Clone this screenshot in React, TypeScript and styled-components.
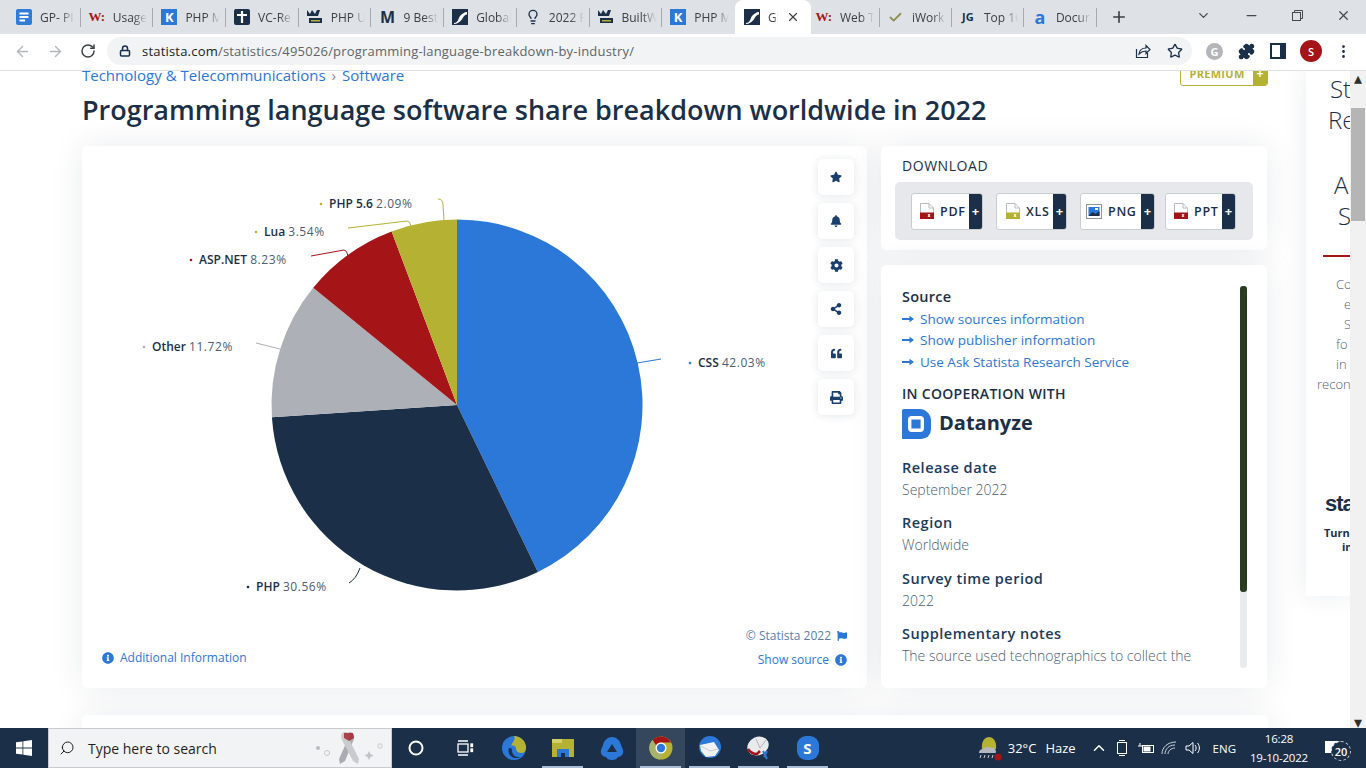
import React from 'react';
import styled, { createGlobalStyle } from 'styled-components';
import {
  ArrowLeft,
  ArrowRight,
  RotateCw,
  Lock,
  Star,
  Puzzle,
  MoreVertical,
  X,
  Minus,
  Plus,
  ChevronDown,
  ChevronUp,
  Search,
  Lightbulb,
  Check,
} from 'lucide-react';
import { FaStar, FaBell, FaCog, FaShareAlt, FaQuoteLeft, FaPrint, FaInfoCircle, FaFlag } from 'react-icons/fa';

const NAVY = '#1b3048';
const BLUE = '#2b78d9';
const OLIVE = '#b5b233';
const RED = '#a51417';
const GREY = '#adb0b6';

const GlobalStyle = createGlobalStyle`
  html, body {
    margin: 0;
    padding: 0;
    background: #fff;
    overflow: hidden;
  }
  * {
    box-sizing: border-box;
  }
  body {
    font-family: "Open Sans", "Liberation Sans", sans-serif;
    color: ${NAVY};
  }
`;

const Frame = styled.div`
  width: 1366px;
  height: 768px;
  display: flex;
  flex-direction: column;
  overflow: hidden;
`;

/* ---- browser chrome ---- */

const TabStrip = styled.div`
  flex: 0 0 34px;
  display: flex;
  align-items: stretch;
  padding-left: 8px;
  background: #dee1e6;
`;

const TabItem = styled.div<{ $active?: boolean; $plain?: boolean; $width?: number; $pad?: number }>`
  flex: 0 0 ${(p) => p.$width ?? 72.7}px;
  min-width: 0;
  display: flex;
  align-items: center;
  gap: 8px;
  padding-left: ${(p) => p.$pad ?? 8}px;
  padding-right: ${(p) => (p.$active ? '11px' : '6px')};
  background: ${(p) => (p.$active ? '#fff' : 'transparent')};
  border-radius: ${(p) => (p.$active ? '8px 8px 0 0' : '0')};
  position: relative;
  &::after {
    content: '';
    display: ${(p) => (p.$plain ? 'none' : 'block')};
    width: 1px;
    height: 19px;
    background: #a7abb1;
    position: absolute;
    right: 0;
    top: 8px;
  }
`;

const TabTitle = styled.span`
  flex: 1;
  min-width: 0;
  font-size: 12px;
  color: #3c4043;
  white-space: nowrap;
  overflow: hidden;
  -webkit-mask-image: linear-gradient(to right, #000 60%, transparent 100%);
  mask-image: linear-gradient(to right, #000 60%, transparent 100%);
`;

const FavSlot = styled.span`
  flex: 0 0 16px;
  width: 16px;
  height: 16px;
  display: flex;
  align-items: center;
  justify-content: center;
`;

const FavLetter = styled.span<{ $color: string; $bg?: string; $serif?: boolean; $size?: number }>`
  width: 16px;
  height: 16px;
  display: flex;
  align-items: center;
  justify-content: center;
  font-family: ${(p) => (p.$serif ? '"Liberation Serif", serif' : '"Open Sans", sans-serif')};
  font-weight: 700;
  font-size: ${(p) => p.$size ?? 12}px;
  line-height: 16px;
  color: ${(p) => p.$color};
  background: ${(p) => p.$bg ?? 'transparent'};
`;

const NewTab = styled.div`
  margin-left: 13px;
  display: flex;
  align-items: center;
  color: #3c4043;
`;

const WindowControls = styled.div`
  margin-left: auto;
  display: flex;
  align-items: center;
  padding-right: 15px;
  gap: 33px;
  color: #45494e;
  padding-bottom: 4px;
`;

const Toolbar = styled.div`
  flex: 0 0 37px;
  display: flex;
  align-items: center;
  background: #fff;
  border-bottom: 1px solid #dfe1e5;
  padding: 0 14px 2px 14px;
`;

const NavIcons = styled.div`
  display: flex;
  align-items: center;
  gap: 16px;
  width: 94px;
`;

const NavIcon = styled.span<{ $dim?: boolean }>`
  display: flex;
  color: ${(p) => (p.$dim ? '#b3b7bc' : '#3c4043')};
`;

const AddressPill = styled.div`
  flex: 0 0 1085px;
  height: 28px;
  display: flex;
  align-items: center;
  padding: 0 9px 0 12px;
  background: #f1f3f4;
  border-radius: 14px;
  color: ${NAVY};
`;

const UrlText = styled.span`
  margin-left: 11px;
  font-size: 13px;
  letter-spacing: 0.2px;
  color: #5f6368;
  b {
    font-weight: 400;
    color: #202124;
  }
`;

const PillActions = styled.div`
  margin-left: auto;
  display: flex;
  align-items: center;
  gap: 16px;
`;

const ExtIcons = styled.div`
  display: flex;
  align-items: center;
  gap: 15px;
  margin-left: 14px;
  color: ${NAVY};
`;

const GrammarlyDot = styled.span`
  width: 17px;
  height: 17px;
  border-radius: 50%;
  background: #b3b5b9;
  color: #fff;
  font-size: 11px;
  font-weight: 700;
  display: flex;
  align-items: center;
  justify-content: center;
`;

const Avatar = styled.span`
  width: 22px;
  height: 22px;
  margin: 0 -2px 0 -1px;
  border-radius: 50%;
  background: ${RED};
  color: #fff;
  font-size: 11px;
  font-weight: 600;
  display: flex;
  align-items: center;
  justify-content: center;
`;

/* ---- page ---- */

const PageArea = styled.div`
  flex: 1;
  min-height: 0;
  display: flex;
  overflow: hidden;
`;

const Content = styled.div`
  flex: 0 0 1350px;
  display: flex;
  align-items: flex-start;
  padding-left: 82px;
  overflow: hidden;
`;

const Main = styled.main`
  flex: 0 0 1186px;
  margin-right: 38px;
  margin-top: -11px;
`;

const HeaderRow = styled.div`
  height: 26px;
  display: flex;
  align-items: flex-end;
  justify-content: space-between;
`;

const Crumbs = styled.div`
  display: flex;
  gap: 6px;
  padding-bottom: 1px;
  font-size: 15px;
  line-height: 20px;
  color: ${BLUE};
`;

const CrumbSep = styled.span`
  color: #7c8a9a;
`;

const PremiumButton = styled.div`
  width: 88px;
  height: 26px;
  display: flex;
  border: 1px solid ${OLIVE};
  border-radius: 3px;
  overflow: hidden;
`;

const PremiumLabel = styled.span`
  flex: 1;
  display: flex;
  align-items: center;
  justify-content: center;
  font-size: 11px;
  font-weight: 700;
  letter-spacing: 0.3px;
  color: ${OLIVE};
`;

const PremiumPlus = styled.span`
  flex: 0 0 14px;
  display: flex;
  align-items: center;
  justify-content: center;
  background: ${OLIVE};
  color: #fff;
  font-size: 12px;
  font-weight: 700;
`;

const Title = styled.h1`
  margin: 6px 0 18px;
  font-size: 27px;
  line-height: 36px;
  font-weight: 600;
  color: ${NAVY};
  white-space: nowrap;
`;

const CardGrid = styled.div`
  display: grid;
  grid-template-columns: 785px 386px;
  gap: 14px;
`;

const Card = styled.section`
  background: #fff;
  border-radius: 6px;
  box-shadow: 0 0 34px rgba(27, 48, 72, 0.09);
`;

const ChartCard = styled(Card)`
  height: 542px;
  display: grid;
  grid-template-columns: 1fr 36px;
  grid-template-rows: 468px 1fr;
  padding: 13px 13px 0 20px;
`;

const ChartSvg = styled.svg`
  display: block;
  width: 696px;
  height: 468px;
  overflow: visible;
`;

const PieLabel = styled.text`
  font-family: "Open Sans", sans-serif;
  font-size: 12px;
  fill: #4a5d72;
`;

const PieName = styled.tspan`
  font-weight: 600;
  fill: ${NAVY};
`;

const PieValue = styled.tspan`
  letter-spacing: 0.55px;
`;

const ToolColumn = styled.div`
  display: flex;
  flex-direction: column;
  gap: 8px;
`;

const ToolButton = styled.button`
  width: 36px;
  height: 36px;
  padding: 0;
  border: 0;
  border-radius: 5px;
  background: #fff;
  box-shadow: 0 1px 8px rgba(27, 48, 72, 0.12);
  color: #1a3f6c;
  display: flex;
  align-items: center;
  justify-content: center;
`;

const ChartFooter = styled.div`
  grid-column: 1 / 3;
  display: flex;
  justify-content: space-between;
  align-items: flex-start;
  font-size: 12px;
  color: ${BLUE};
`;

const FooterLeft = styled.div`
  margin-top: 23px;
  display: flex;
  align-items: center;
  gap: 6px;
  line-height: 16px;
`;

const FooterRight = styled.div`
  display: flex;
  flex-direction: column;
  align-items: flex-end;
  gap: 7px;
  margin-right: 7px;
  line-height: 17px;
`;

const FooterLine = styled.div<{ $muted?: boolean }>`
  display: flex;
  align-items: center;
  gap: 6px;
  color: ${(p) => (p.$muted ? '#5c80ad' : BLUE)};
`;

const SideColumn = styled.div`
  display: flex;
  flex-direction: column;
  gap: 15px;
`;

const DownloadCard = styled(Card)`
  height: 104px;
  padding: 11px 14px 0;
`;

const DownloadTitle = styled.div`
  font-size: 14px;
  line-height: 18px;
  letter-spacing: 0.55px;
  padding-left: 7px;
  color: ${NAVY};
`;

const DownloadBar = styled.div`
  margin-top: 7px;
  height: 58px;
  display: flex;
  align-items: center;
  padding-left: 16px;
  background: #e6e8eb;
  border-radius: 5px;
`;

const DownloadButton = styled.div<{ $width: number; $left: number }>`
  flex: 0 0 ${(p) => p.$width}px;
  margin-left: ${(p) => p.$left}px;
  height: 37px;
  display: flex;
  align-items: center;
  background: #fff;
  border: 1px solid #c9ccd1;
  border-radius: 3px;
  overflow: hidden;
`;

const FileLabel = styled.span<{ $pad: number }>`
  flex: 1;
  display: flex;
  align-items: center;
  gap: 6px;
  padding-left: ${(p) => p.$pad}px;
  font-size: 12.5px;
  font-weight: 600;
  letter-spacing: 0.7px;
  color: ${NAVY};
`;

const FilePlus = styled.span`
  flex: 0 0 13px;
  align-self: stretch;
  display: flex;
  align-items: center;
  justify-content: center;
  background: ${NAVY};
  color: #fff;
  font-size: 13px;
  font-weight: 700;
`;

const InfoCard = styled(Card)`
  height: 423px;
  padding: 21px 20px 20px 21px;
  display: flex;
`;

const InfoBody = styled.div`
  flex: 1;
  min-width: 0;
  overflow: hidden;
`;

const InfoRail = styled.div`
  flex: 0 0 7px;
  background: #e9ebee;
  border-radius: 3px;
`;

const InfoThumb = styled.div`
  height: 306px;
  border-radius: 3px;
  background: #2c3c22;
`;

const InfoHeading = styled.div<{ $dark?: boolean }>`
  font-size: 14.5px;
  font-weight: 600;
  line-height: 22px;
  letter-spacing: ${(p) => (p.$dark ? '0.25px' : '0.5px')};
  color: ${(p) => (p.$dark ? NAVY : '#1b3a5c')};
`;

const InfoValue = styled.div`
  font-size: 14px;
  font-weight: 300;
  line-height: 22px;
  color: #4d5f73;
  white-space: nowrap;
`;

const InfoLink = styled.div`
  display: flex;
  align-items: center;
  gap: 6px;
  height: 21.5px;
  font-size: 13.5px;
  color: ${BLUE};
`;

const InfoGroup = styled.div`
  margin-top: 11.5px;
`;

const CoopLabel = styled.div`
  margin-top: 11.5px;
  font-size: 14px;
  font-weight: 600;
  line-height: 20px;
  letter-spacing: 0.3px;
  color: ${NAVY};
`;

const DatanyzeRow = styled.div`
  margin: 4px 0 17.5px -1px;
  height: 31px;
  display: flex;
  align-items: center;
  gap: 8px;
`;

const DatanyzeName = styled.span`
  margin-top: -3px;
  font-size: 20px;
  font-weight: 700;
  color: ${NAVY};
`;

const BottomCard = styled(Card)`
  margin-top: 27px;
  height: 100px;
`;

const AdCard = styled.aside`
  flex: 0 0 44px;
  height: 525px;
  background: #fff;
  overflow: hidden;
  box-shadow: 0 0 26px rgba(27, 48, 72, 0.09);
  padding-top: 2px;
`;

const AdHeadline = styled.div<{ $indent: number; $top?: number }>`
  margin-top: ${(p) => p.$top ?? 0}px;
  padding-left: ${(p) => p.$indent}px;
  font-size: 24px;
  font-weight: 300;
  line-height: 31px;
  white-space: nowrap;
  color: ${NAVY};
`;

const AdRule = styled.div`
  margin: 24px 0 0 17px;
  height: 2px;
  background: ${RED};
`;

const AdCopy = styled.div<{ $indent: number; $top?: number }>`
  margin-top: ${(p) => p.$top ?? 0}px;
  padding-left: ${(p) => p.$indent}px;
  font-size: 13px;
  font-weight: 300;
  line-height: 20px;
  white-space: nowrap;
  color: #4d5f73;
`;

const AdBrand = styled.div`
  margin-top: 96px;
  padding-left: 19px;
  font-family: "Liberation Sans", sans-serif;
  font-size: 22px;
  font-weight: 700;
  letter-spacing: -1px;
  line-height: 28px;
  color: ${NAVY};
`;

const AdTag = styled.div<{ $indent: number; $top?: number }>`
  margin-top: ${(p) => p.$top ?? 0}px;
  padding-left: ${(p) => p.$indent}px;
  font-size: 11px;
  font-weight: 700;
  line-height: 14px;
  white-space: nowrap;
  color: ${NAVY};
`;

const PageScrollbar = styled.div`
  flex: 0 0 16px;
  display: flex;
  flex-direction: column;
  align-items: center;
  justify-content: space-between;
  background: #f1f1f1;
  padding: 3px 1px 2px;
  color: #2f2f2f;
`;

const ScrollThumb = styled.div`
  width: 14px;
  height: 113px;
  margin: 26px 0 auto;
  background: #b5b5b5;
`;

const ScrollArrow = styled.span`
  display: flex;
  width: 8px;
  height: 8px;
  align-items: center;
  justify-content: center;
`;

/* ---- taskbar ---- */

const Taskbar = styled.footer`
  flex: 0 0 40px;
  display: flex;
  align-items: stretch;
  background: ${NAVY};
  color: #fff;
`;

const StartSlot = styled.div`
  flex: 0 0 48px;
  display: flex;
  align-items: center;
  justify-content: center;
`;

const SearchBox = styled.div`
  flex: 0 0 344px;
  display: flex;
  align-items: center;
  gap: 13px;
  padding: 0 6px 0 10px;
  background: #f2f3f5;
  border: 1px solid #c8cacd;
  color: #1f1f1f;
  font-size: 14px;
`;

const SearchGlyph = styled(Search)`
  transform: scaleX(-1);
`;

const SearchText = styled.span`
  flex: 1;
`;

const TaskApps = styled.div`
  display: flex;
`;

const TaskSlot = styled.div<{ $width?: number; $open?: boolean; $hot?: boolean }>`
  flex: 0 0 ${(p) => p.$width ?? 49}px;
  width: ${(p) => p.$width ?? 49}px;
  display: flex;
  align-items: center;
  justify-content: center;
  position: relative;
  background: ${(p) => (p.$hot ? '#34475c' : 'transparent')};
  &::after {
    content: '';
    display: ${(p) => (p.$open ? 'block' : 'none')};
    position: absolute;
    left: 4px;
    right: 4px;
    bottom: 0;
    height: 2px;
    background: #a9bdd6;
  }
`;

const Tray = styled.div`
  margin-left: auto;
  display: flex;
  align-items: center;
  padding-right: 20px;
`;

const WeatherText = styled.span`
  margin-left: 6px;
  font-size: 13px;
  display: flex;
  gap: 9px;
`;

const TrayIcons = styled.div`
  display: flex;
  align-items: center;
  gap: 5.5px;
  margin-left: 14px;
`;

const TrayLang = styled.span`
  margin-left: 11px;
  font-size: 11.5px;
`;

const Clock = styled.div`
  margin-left: 7px;
  width: 72px;
  display: flex;
  flex-direction: column;
  align-items: center;
  font-size: 11.5px;
  letter-spacing: -0.2px;
  line-height: 19px;
`;

const NotifyWrap = styled.div`
  margin-left: 5px;
  width: 26px;
  height: 26px;
  position: relative;
  display: flex;
  align-items: center;
  justify-content: center;
`;

const NotifyBadge = styled.span`
  position: absolute;
  right: -5px;
  bottom: 0;
  width: 20px;
  height: 20px;
  border-radius: 50%;
  background: ${NAVY};
  border: 1px dashed #c9d2dc;
  font-size: 11px;
  font-weight: 600;
  display: flex;
  align-items: center;
  justify-content: center;
`;

/* ---- small drawings ---- */

const StatistaFav = () => (
  <svg width="16" height="16" viewBox="0 0 16 16">
    <rect width="16" height="16" fill={NAVY} />
    <path d="M2 14 C7 14 6 8 9 6 C10.500 5 12 3 15 3 L15 5.500 C11 6 11 10 8.500 12 C7 13.500 5 15 2 15Z" fill="#fff" />
  </svg>
);

const DocFav = () => (
  <svg width="16" height="16" viewBox="0 0 16 16">
    <rect width="16" height="16" rx="2" fill="#2f7bd8" />
    <path d="M3.500 4.500h9M3.500 8h9M3.500 11.500h5.500" stroke="#fff" strokeWidth="1.800" />
  </svg>
);

const CrossFav = () => (
  <svg width="16" height="16" viewBox="0 0 16 16">
    <rect width="16" height="16" rx="2" fill={NAVY} />
    <path d="M8 2v12M3 6h10" stroke="#fff" strokeWidth="2.200" />
  </svg>
);

const BuiltFav = () => (
  <svg width="16" height="16" viewBox="0 0 16 16">
    <path d="M0 1l3 4 2-4 3 4 2-4h3l-2 6H0z" fill={NAVY} />
    <rect x="2" y="9" width="13" height="5" fill={NAVY} />
    <rect x="4" y="11" width="9" height="1.500" fill="#b5b233" />
  </svg>
);

type Tab = {
  key: string;
  title: string;
  icon: React.ReactNode;
  active?: boolean;
  plain?: boolean;
  width?: number;
  pad?: number;
};

const tabs: Tab[] = [
  { key: 'gp', title: 'GP- PI', icon: <DocFav /> },
  { key: 'usage', title: 'Usage', icon: <FavLetter $color={RED} $serif $size={13}>W:</FavLetter> },
  { key: 'k1', title: 'PHP M', icon: <FavLetter $color="#fff" $bg={BLUE} $size={13}>K</FavLetter> },
  { key: 'vc', title: 'VC-Re', icon: <CrossFav /> },
  { key: 'b1', title: 'PHP U', icon: <BuiltFav /> },
  { key: 'm', title: '9 Best', icon: <FavLetter $color={NAVY} $size={16}>M</FavLetter> },
  { key: 'global', title: 'Global', icon: <StatistaFav /> },
  { key: 'bulb', title: '2022 F', icon: <Lightbulb size={16} color={NAVY} /> },
  { key: 'b2', title: 'BuiltW', icon: <BuiltFav /> },
  { key: 'k2', title: 'PHP M', icon: <FavLetter $color="#fff" $bg={BLUE} $size={13}>K</FavLetter>, plain: true },
  { key: 'active', title: 'Gl', icon: <StatistaFav />, active: true, plain: true, width: 76, pad: 9 },
  { key: 'web', title: 'Web T', icon: <FavLetter $color={RED} $serif $size={13}>W:</FavLetter>, width: 69, pad: 5 },
  { key: 'iwork', title: 'iWork', icon: <Check size={15} color="#8f9055" strokeWidth={3} />, width: 72 },
  { key: 'top', title: 'Top 1C', icon: <FavLetter $color={NAVY} $size={11}>JG</FavLetter>, width: 72 },
  { key: 'doc', title: 'Docur', icon: <FavLetter $color={BLUE} $size={18}>a</FavLetter>, width: 73 },
];

/* ---- pie chart ---- */

const CX = 355;
const CY = 246;
const R = 185.5;

// Lua and PHP 5.6 share a colour with no visible seam, so they are one sector
const slices = [
  { name: 'CSS', value: 42.03, color: BLUE },
  { name: 'PHP', value: 30.56, color: NAVY },
  { name: 'Other', value: 11.72, color: GREY },
  { name: 'ASP.NET', value: 8.23, color: RED },
  { name: 'Lua and PHP 5.6', value: 5.63, color: OLIVE },
];

const labels = [
  { name: 'CSS', value: '42.03%', x: 596, y: 208, dot: BLUE, line: 'M535 204 L559 200', stroke: BLUE },
  { name: 'PHP', value: '30.56%', x: 154, y: 432, dot: NAVY, line: 'M258 409 Q254 420 247 424', stroke: NAVY },
  { name: 'Other', value: '11.72%', x: 50, y: 192, dot: GREY, line: 'M154 184 L178 190', stroke: GREY },
  { name: 'ASP.NET', value: '8.23%', x: 97, y: 105, dot: RED, line: 'M209 97 L242 91 Q245 91 246 97', stroke: RED },
  { name: 'Lua', value: '3.54%', x: 162, y: 77, dot: OLIVE, line: 'M246 69 L305 62 Q308 62 309 67', stroke: OLIVE },
  { name: 'PHP 5.6', value: '2.09%', x: 227, y: 49, dot: OLIVE, line: 'M336 40 Q341 40 341 46 L342 61', stroke: OLIVE },
];

const pointAt = (fraction: number) => {
  const a = fraction * 2 * Math.PI;
  return [CX + R * Math.sin(a), CY - R * Math.cos(a)];
};

const PieChart = () => {
  const total = slices.reduce((sum, s) => sum + s.value, 0);
  let start = 0;
  return (
    <ChartSvg viewBox="0 0 696 468">
      {slices.map((s) => {
        const end = start + s.value / total;
        const [x1, y1] = pointAt(start);
        const [x2, y2] = pointAt(end);
        const large = end - start > 0.5 ? 1 : 0;
        start = end;
        return (
          <path
            key={s.name}
            d={`M${CX} ${CY} L${x1} ${y1} A${R} ${R} 0 ${large} 1 ${x2} ${y2} Z`}
            fill={s.color}
          />
        );
      })}
      {labels.map((l) => (
        <g key={l.name}>
          <path d={l.line} fill="none" stroke={l.stroke} strokeWidth="1" />
          <circle cx={l.x - 8} cy={l.y - 4} r="1.300" fill={l.dot} />
          <PieLabel x={l.x} y={l.y}>
            <PieName>{l.name}</PieName> <PieValue>{l.value}</PieValue>
          </PieLabel>
        </g>
      ))}
    </ChartSvg>
  );
};

/* ---- file type icons for the download bar ---- */

const FileIcon = ({ band }: { band: string }) => (
  <svg width="14" height="16" viewBox="0 0 14 16">
    <path d="M.5.500h8.500l4.500 4.500v10.500H.5z" fill="#fff" stroke="#b9bcc1" />
    <path d="M9 .5v4.500h4.500" fill="none" stroke="#b9bcc1" />
    <rect x="0" y="9.500" width="14" height="6.500" fill={band} />
    <path d="M8 11l2 3M10 11l-2 3" stroke="#fff" />
  </svg>
);

const ImageIcon = () => (
  <svg width="16" height="15" viewBox="0 0 16 15">
    <rect x=".5" y=".5" width="15" height="14" fill="#fff" stroke="#8f9399" />
    <rect x="2.500" y="3" width="11" height="9" fill={BLUE} />
    <path d="M2.500 12l4-4 3 2 4-3v5z" fill={NAVY} />
    <rect x="9" y="4" width="3" height="2" fill="#fff" />
  </svg>
);

const ArrowMark = () => (
  <svg width="12" height="8" viewBox="0 0 12 8">
    <path d="M0 4h8" stroke={BLUE} strokeWidth="2" />
    <path d="M7.500 .8L12 4 7.500 7.200z" fill={BLUE} />
  </svg>
);

const DatanyzeMark = () => (
  <svg width="30" height="30" viewBox="0 0 31 31">
    <path d="M4 0h15a12 12 0 0 1 12 12v9a10 10 0 0 1-10 10H0V4a4 4 0 0 1 4-4z" fill={BLUE} />
    <rect x="9" y="9" width="13" height="13" rx="2" fill="none" stroke="#fff" strokeWidth="3.500" />
  </svg>
);

const ShareBox = () => (
  <svg width="16" height="16" viewBox="0 0 16 16" fill="none" stroke={NAVY} strokeWidth="1.200">
    <path d="M1.500 6v8.500h11V10" />
    <path d="M4 11c.5-4 3.500-6 7-6V2.500l4 4-4 4V8c-3 0-5 1-7 3z" />
  </svg>
);

const RestoreIcon = () => (
  <svg width="11" height="11" viewBox="0 0 11 11" fill="none" stroke="currentColor">
    <rect x=".5" y="2.500" width="8" height="8" />
    <path d="M2.500 2.500v-2h8v8h-2" />
  </svg>
);

const PanelIcon = () => (
  <svg width="16" height="16" viewBox="0 0 16 16">
    <rect x="1" y="1" width="14" height="14" fill="none" stroke={NAVY} strokeWidth="2" />
    <rect x="10" y="1" width="5" height="14" fill={NAVY} />
  </svg>
);

/* ---- taskbar icons ---- */

const WindowsLogo = () => (
  <svg width="16" height="16" viewBox="0 0 16 16" fill="#fff">
    <path d="M0 2.300l6.500-.9v6.200H0zM7.300 1.300L16 0v7.600H7.300zM0 8.400h6.500v6.200L0 13.700zM7.300 8.400H16V16l-8.700-1.300z" />
  </svg>
);

const Ribbon = () => (
  <svg width="70" height="36" viewBox="0 0 70 36">
    <g transform="translate(20 0)">
      <path d="M14 2c4 0 6 3 5 7L10 31l-5 3-1-5 9-20z" fill="#a9acb1" />
      <path d="M10 2c-3 0-5 3-3 8l11 21 5 3 1-5L14 9c1-3 2-7-4-7z" fill="#c9cbce" />
      <path d="M9 3h9l1 5-5 3-5-3z" fill={RED} opacity=".75" />
    </g>
    <circle cx="3" cy="18" r="2" fill="#b9bcc1" />
    <circle cx="12" cy="23" r="2.500" fill="none" stroke="#c9cbce" />
    <path d="M54 21l1.500 3 3 1.500-3 1.500-1.500 3-1.500-3-3-1.500 3-1.500z" fill="#c0c3c7" />
    <rect x="63" y="14" width="4" height="4" rx="1" fill="none" stroke="#c9cbce" />
  </svg>
);

const TaskView = () => (
  <svg width="18" height="18" viewBox="0 0 18 18" fill="none" stroke="#fff" strokeWidth="1.300">
    <rect x="2" y="5" width="10" height="8" />
    <path d="M2 2h10M2 16h10" />
    <rect x="15" y="5" width="1.500" height="2.500" fill="#fff" />
    <rect x="15" y="10" width="1.500" height="2.500" fill="#fff" />
  </svg>
);

const EdgeIcon = () => (
  <svg width="26" height="26" viewBox="0 0 26 26">
    <circle cx="13" cy="13" r="12" fill={BLUE} />
    <path d="M13 1a12 12 0 0 1 12 12c0 3-2 5-5 5-4 0-5-3-5-5s-3-3-5-2c2-5 5-7 3-10z" fill={OLIVE} />
    <path d="M8 13c-2 5 2 10 7 10 2 0 3 0 4-1-5 1-8-3-8-6 0-2 0-3-3-3z" fill={NAVY} />
  </svg>
);

const FolderIcon = () => (
  <svg width="24" height="22" viewBox="0 0 24 22">
    <rect x="1" y="2" width="22" height="18" fill={OLIVE} />
    <rect x="1" y="2" width="10" height="4" fill="#d3d06a" />
    <rect x="6" y="12" width="12" height="8" fill={BLUE} />
    <rect x="10" y="16" width="4" height="4" fill={NAVY} />
  </svg>
);

const BlueAppIcon = () => (
  <svg width="26" height="26" viewBox="0 0 26 26" fill={BLUE}>
    <path d="M13 2c4 0 8 3 9 8l2 5c1 4-2 7-5 7-1 2-3 3-6 3s-5-1-6-3c-3 0-6-3-5-7l2-5c1-5 5-8 9-8zm0 7l-5 8h10z" />
  </svg>
);

const ChromeIcon = () => (
  <svg width="24" height="24" viewBox="0 0 24 24">
    <circle cx="12" cy="12" r="11.500" fill={OLIVE} />
    <path d="M12 .5A11.500 11.500 0 0 1 22 6.500H12a5.500 5.500 0 0 0-5 3L3.500 4A11.500 11.500 0 0 1 12 .5z" fill={RED} />
    <path d="M3.500 4L9 13a5.500 5.500 0 0 0 5 4.300L10.500 23.400A11.500 11.500 0 0 1 3.500 4z" fill="#a8b36a" />
    <circle cx="12" cy="12" r="5.500" fill="#fff" />
    <circle cx="12" cy="12" r="4.200" fill={BLUE} />
  </svg>
);

const MailIcon = () => (
  <svg width="26" height="26" viewBox="0 0 26 26">
    <circle cx="13" cy="12" r="11" fill={BLUE} />
    <path d="M3 10l14-3 5 8-4 6-9 1-5-6z" fill="#f2f3f5" />
    <path d="M4 11l9 5 8-2" fill="none" stroke="#c9cbce" />
  </svg>
);

const ShellIcon = () => (
  <svg width="26" height="26" viewBox="0 0 26 26">
    <ellipse cx="12" cy="11" rx="11" ry="9" transform="rotate(-25 12 11)" fill="#e9eaec" />
    <path d="M2 14c2 3 5 5 9 5l3-3" fill="none" stroke={RED} strokeWidth="2.500" />
    <path d="M17 16l4 8M21 16l-3 6" stroke={BLUE} strokeWidth="2" fill="none" />
    <path d="M10 4l4 9 6-8" fill="none" stroke="#b0b3b8" />
  </svg>
);

const SkypeIcon = styled.span`
  width: 22px;
  height: 24px;
  border-radius: 9px;
  background: ${BLUE};
  color: #fff;
  font-size: 15px;
  font-weight: 700;
  display: flex;
  align-items: center;
  justify-content: center;
`;

const WeatherIcon = () => (
  <svg width="24" height="26" viewBox="0 0 24 26">
    <path d="M4 14C3 6 7 2 11 2s8 4 7 12z" fill={OLIVE} />
    <path d="M1 18c0-3 2-4 4-4 1-2 6-3 8-1 3-1 5 1 5 4 0 1-1 1-2 1H2c-1 0-1 0-1 0z" fill="#b4b7bb" />
    <path d="M3 20l-1 3M7 20l-1 3M11 20l-1 3M15 20l-1 3" stroke="#c9cbce" />
    <circle cx="20" cy="22" r="3.500" fill={RED} />
  </svg>
);

const TrayGlyphs = () => (
  <TrayIcons>
    <ChevronUp size={18} color="#fff" />
    <svg width="18" height="18" viewBox="0 0 18 18" fill="none" stroke="#fff">
      <rect x="4.500" y="3.500" width="9" height="11" />
      <path d="M6 1.500h6M6 16.500h6" />
    </svg>
    <svg width="18" height="18" viewBox="0 0 18 18" fill="none" stroke="#fff">
      <rect x="5.500" y="6.500" width="11" height="7" />
      <rect x="7" y="8" width="6" height="4" fill="#fff" />
      <path d="M1 7h4M3 4v3" />
    </svg>
    <svg width="18" height="18" viewBox="0 0 18 18" fill="none" stroke="#c9d2dc">
      <path d="M2 15C2 8 8 3 16 3M5 15c0-5 4-9 10-9M8 15c0-3 3-6 7-6" />
    </svg>
    <svg width="18" height="18" viewBox="0 0 18 18" fill="none" stroke="#fff">
      <path d="M2 7h3l4-3.500v11L5 11H2z" />
      <path d="M11 6c1.500 2 1.500 4 0 6M13.500 4c2.500 3 2.500 7 0 10" />
    </svg>
  </TrayIcons>
);

const downloads = [
  { label: 'PDF', width: 72, left: 0, pad: 8, icon: <FileIcon band={RED} /> },
  { label: 'XLS', width: 71, left: 13, pad: 9, icon: <FileIcon band={OLIVE} /> },
  { label: 'PNG', width: 75, left: 13, pad: 5, icon: <ImageIcon /> },
  { label: 'PPT', width: 71, left: 10, pad: 8, icon: <FileIcon band={RED} /> },
];

const details = [
  { heading: 'Release date', value: 'September 2022' },
  { heading: 'Region', value: 'Worldwide' },
  { heading: 'Survey time period', value: '2022' },
  { heading: 'Supplementary notes', value: 'The source used technographics to collect the' },
];

const App = () => {
  return (
    <Frame>
      <GlobalStyle />
      <TabStrip>
        {tabs.map((t) => (
          <TabItem key={t.key} $active={t.active} $plain={t.plain} $width={t.width} $pad={t.pad}>
            <FavSlot>{t.icon}</FavSlot>
            <TabTitle>{t.title}</TabTitle>
            {t.active && <X size={14} color="#3c4043" />}
          </TabItem>
        ))}
        <NewTab>
          <Plus size={18} strokeWidth={2.2} />
        </NewTab>
        <WindowControls>
          <ChevronDown size={15} />
          <Minus size={15} />
          <RestoreIcon />
          <X size={15} />
        </WindowControls>
      </TabStrip>

      <Toolbar>
        <NavIcons>
          <NavIcon $dim>
            <ArrowLeft size={17} />
          </NavIcon>
          <NavIcon $dim>
            <ArrowRight size={17} />
          </NavIcon>
          <NavIcon>
            <RotateCw size={16} strokeWidth={2.2} />
          </NavIcon>
        </NavIcons>
        <AddressPill>
          <Lock size={12} strokeWidth={3} />
          <UrlText>
            <b>statista.com</b>/statistics/495026/programming-language-breakdown-by-industry/
          </UrlText>
          <PillActions>
            <ShareBox />
            <Star size={16} />
          </PillActions>
        </AddressPill>
        <ExtIcons>
          <GrammarlyDot>G</GrammarlyDot>
          <Puzzle size={17} fill={NAVY} />
          <PanelIcon />
          <Avatar>S</Avatar>
          <MoreVertical size={17} />
        </ExtIcons>
      </Toolbar>

      <PageArea>
        <Content>
          <Main>
            <HeaderRow>
              <Crumbs>
                <span>Technology &amp; Telecommunications</span>
                <CrumbSep>›</CrumbSep>
                <span>Software</span>
              </Crumbs>
              <PremiumButton>
                <PremiumLabel>PREMIUM</PremiumLabel>
                <PremiumPlus>+</PremiumPlus>
              </PremiumButton>
            </HeaderRow>
            <Title>Programming language software share breakdown worldwide in 2022</Title>
            <CardGrid>
              <ChartCard>
                <PieChart />
                <ToolColumn>
                  <ToolButton><FaStar size={12} /></ToolButton>
                  <ToolButton><FaBell size={12} /></ToolButton>
                  <ToolButton><FaCog size={13} /></ToolButton>
                  <ToolButton><FaShareAlt size={12} /></ToolButton>
                  <ToolButton><FaQuoteLeft size={11} /></ToolButton>
                  <ToolButton><FaPrint size={13} /></ToolButton>
                </ToolColumn>
                <ChartFooter>
                  <FooterLeft>
                    <FaInfoCircle size={12} />
                    Additional Information
                  </FooterLeft>
                  <FooterRight>
                    <FooterLine $muted>
                      © Statista 2022 <FaFlag size={10} color={BLUE} />
                    </FooterLine>
                    <FooterLine>
                      Show source <FaInfoCircle size={12} />
                    </FooterLine>
                  </FooterRight>
                </ChartFooter>
              </ChartCard>

              <SideColumn>
                <DownloadCard>
                  <DownloadTitle>DOWNLOAD</DownloadTitle>
                  <DownloadBar>
                    {downloads.map((d) => (
                      <DownloadButton key={d.label} $width={d.width} $left={d.left}>
                        <FileLabel $pad={d.pad}>
                          {d.icon}
                          {d.label}
                        </FileLabel>
                        <FilePlus>+</FilePlus>
                      </DownloadButton>
                    ))}
                  </DownloadBar>
                </DownloadCard>

                <InfoCard>
                  <InfoBody>
                    <InfoHeading $dark>Source</InfoHeading>
                    <InfoLink><ArrowMark />Show sources information</InfoLink>
                    <InfoLink><ArrowMark />Show publisher information</InfoLink>
                    <InfoLink><ArrowMark />Use Ask Statista Research Service</InfoLink>
                    <CoopLabel>IN COOPERATION WITH</CoopLabel>
                    <DatanyzeRow>
                      <DatanyzeMark />
                      <DatanyzeName>Datanyze</DatanyzeName>
                    </DatanyzeRow>
                    {details.map((d) => (
                      <InfoGroup key={d.heading}>
                        <InfoHeading>{d.heading}</InfoHeading>
                        <InfoValue>{d.value}</InfoValue>
                      </InfoGroup>
                    ))}
                  </InfoBody>
                  <InfoRail>
                    <InfoThumb />
                  </InfoRail>
                </InfoCard>
              </SideColumn>
            </CardGrid>
            <BottomCard />
          </Main>

          <AdCard>
            <AdHeadline $indent={24}>St</AdHeadline>
            <AdHeadline $indent={22}>Re</AdHeadline>
            <AdHeadline $indent={28} $top={34}>A</AdHeadline>
            <AdHeadline $indent={32}>S</AdHeadline>
            <AdRule />
            <AdCopy $indent={30} $top={17}>Co</AdCopy>
            <AdCopy $indent={38}>e</AdCopy>
            <AdCopy $indent={38}>S</AdCopy>
            <AdCopy $indent={30}>fo</AdCopy>
            <AdCopy $indent={30}>in</AdCopy>
            <AdCopy $indent={11}>recon</AdCopy>
            <AdBrand>sta</AdBrand>
            <AdTag $indent={18} $top={8}>Turn</AdTag>
            <AdTag $indent={36}>in</AdTag>
          </AdCard>
        </Content>
        <PageScrollbar>
          <ScrollArrow>▴</ScrollArrow>
          <ScrollThumb />
          <ScrollArrow>▾</ScrollArrow>
        </PageScrollbar>
      </PageArea>

      <Taskbar>
        <StartSlot>
          <WindowsLogo />
        </StartSlot>
        <SearchBox>
          <SearchGlyph size={16} strokeWidth={1.5} />
          <SearchText>Type here to search</SearchText>
          <Ribbon />
        </SearchBox>
        <TaskApps>
          <TaskSlot $width={48}>
            <svg width="16" height="16" viewBox="0 0 16 16" fill="none" stroke="#fff" strokeWidth="2">
              <circle cx="8" cy="8" r="6.500" />
            </svg>
          </TaskSlot>
          <TaskSlot><TaskView /></TaskSlot>
          <TaskSlot><EdgeIcon /></TaskSlot>
          <TaskSlot $open><FolderIcon /></TaskSlot>
          <TaskSlot><BlueAppIcon /></TaskSlot>
          <TaskSlot $open $hot><ChromeIcon /></TaskSlot>
          <TaskSlot $open><MailIcon /></TaskSlot>
          <TaskSlot $open><ShellIcon /></TaskSlot>
          <TaskSlot $open><SkypeIcon>S</SkypeIcon></TaskSlot>
        </TaskApps>
        <Tray>
          <WeatherIcon />
          <WeatherText>
            <span>32°C</span>
            <span>Haze</span>
          </WeatherText>
          <TrayGlyphs />
          <TrayLang>ENG</TrayLang>
          <Clock>
            <span>16:28</span>
            <span>19-10-2022</span>
          </Clock>
          <NotifyWrap>
            <svg width="16" height="15" viewBox="0 0 16 15" fill="#fff">
              <path d="M0 0h16v12H0z" />
            </svg>
            <NotifyBadge>20</NotifyBadge>
          </NotifyWrap>
        </Tray>
      </Taskbar>
    </Frame>
  );
};

export default App;
